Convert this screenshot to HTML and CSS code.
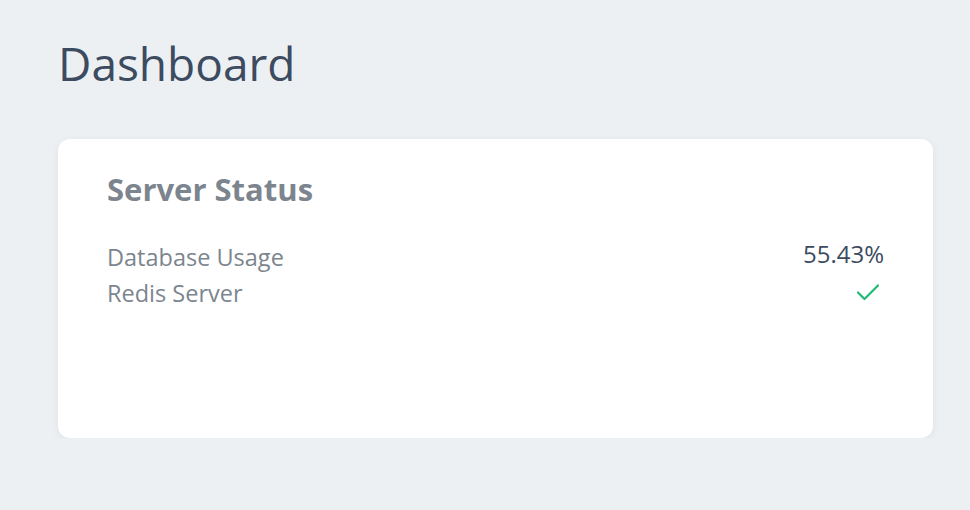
FILE: index.html
```html
<!DOCTYPE html>
<html lang="en">
<head>
    <meta charset="UTF-8">
    <meta name="viewport" content="width=device-width, initial-scale=1.0">
    <title>Dashboard</title>
    <link rel="stylesheet" href="styles.css">
</head>
<body>
    <main class="page">
        <h1 class="page-title">Dashboard</h1>

        <section class="card">
            <h2 class="card-title">Server Status</h2>
            <div class="status-list">
                <div class="status-row">
                    <span class="status-label">Database Usage</span>
                    <span class="status-value">55.43%</span>
                </div>
                <div class="status-row">
                    <span class="status-label">Redis Server</span>
                    <span class="status-value">
                        <svg class="check" width="24" height="18" viewBox="0 0 24 18">
                            <path d="M2 9.5 L8.5 16 L22 2.5" fill="none" stroke="#21b978" stroke-width="2.2" stroke-linecap="round" stroke-linejoin="round"/>
                        </svg>
                    </span>
                </div>
            </div>
        </section>
    </main>
</body>
</html>
```

FILE: styles.css
```css
body {
    margin: 0;
    background: #edf0f3;
    font-family: "Open Sans", Lato, sans-serif;
    color: #3c4b5f;
}

.page {
    padding: 28px 37px 0 58px;
}

.page-title {
    margin: 0 0 41px 0;
    font-size: 46px;
    font-weight: 400;
    line-height: 70px;
    color: #3c4b5f;
}

.card {
    background: #fff;
    border-radius: 12px;
    box-shadow: 0 2px 8px rgba(0, 0, 0, 0.06);
    padding: 30px 49px 0 49px;
    height: 269px;
}

.card-title {
    margin: 0 0 30px 0;
    font-size: 31px;
    font-weight: 700;
    line-height: 40px;
    color: #7c858e;
}

.status-row {
    display: flex;
    justify-content: space-between;
    align-items: flex-start;
    height: 36px;
}

.status-label {
    font-size: 23.5px;
    line-height: 36px;
    color: #7c858e;
}

.status-value {
    font-size: 24px;
    line-height: 30px;
    color: #3c4b5f;
}

.check {
    display: block;
    margin: 8px 4px 0 0;
}
```
